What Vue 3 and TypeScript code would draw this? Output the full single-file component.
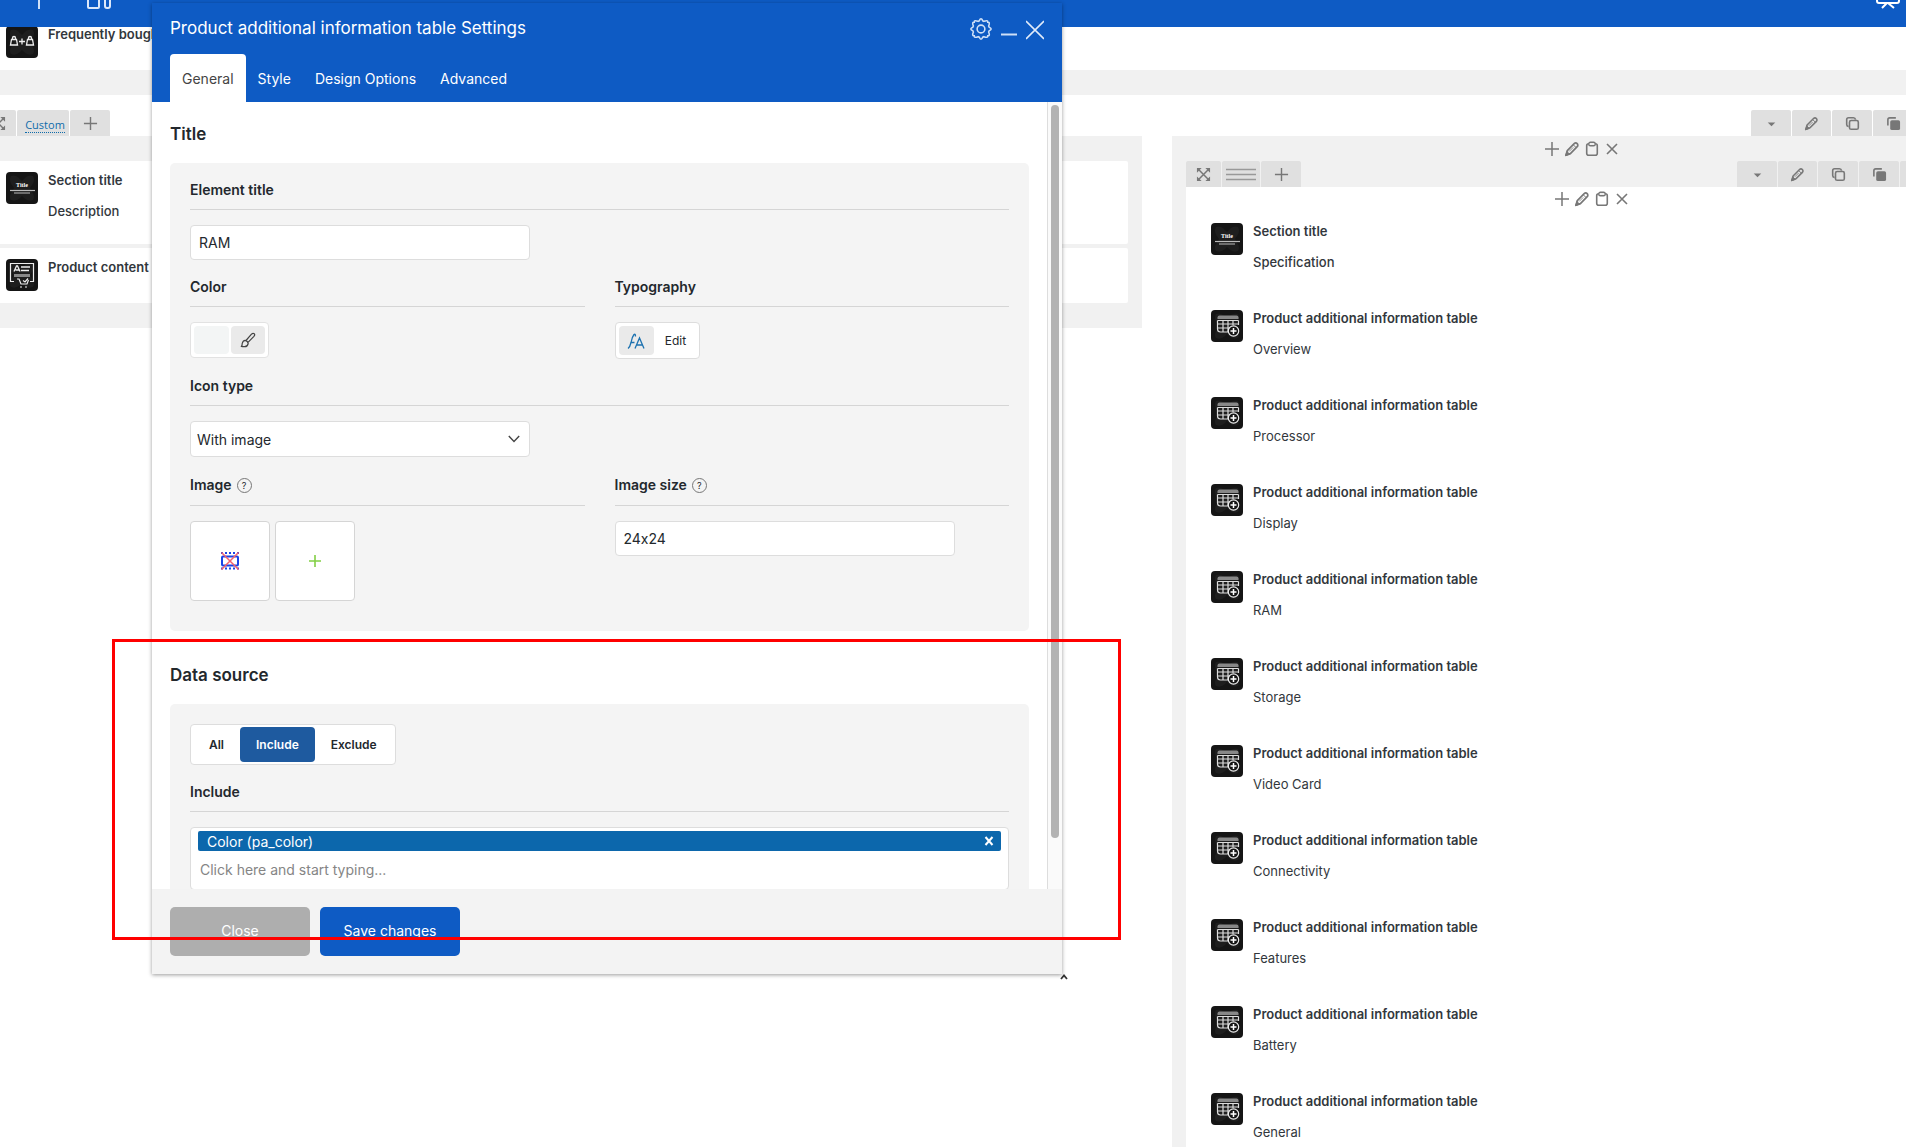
<script setup lang="ts">
import { ref } from 'vue'

interface BuilderItem {
  title: string
  description?: string
  icon: 'bought' | 'title' | 'content' | 'table'
}

const leftItems: BuilderItem[] = [
  { title: 'Section title', description: 'Description', icon: 'title' },
  { title: 'Product content', icon: 'content' },
]

const tableNames = ['Overview', 'Processor', 'Display', 'RAM', 'Storage', 'Video Card', 'Connectivity', 'Features', 'Battery', 'General']
const rightItems: BuilderItem[] = [
  { title: 'Section title', description: 'Specification', icon: 'title' },
  ...tableNames.map((name): BuilderItem => ({ title: 'Product additional information table', description: name, icon: 'table' })),
]

const tools = ['caret', 'pencil', 'copy', 'solid', 'close', 'close']
const actions = ['plus', 'pencil', 'clipboard', 'close']
const tabs = ['General', 'Style', 'Design Options', 'Advanced']
const sources = ['All', 'Include', 'Exclude']

const activeTab = ref('General')
const activeSource = ref('Include')
const elementTitle = ref('RAM')
const imageSize = ref('24x24')
const iconType = ref('With image')
const query = ref('')
</script>

<template>
  <div class="page">
    <svg class="sprite" aria-hidden="true">
      <symbol id="i-plus" viewBox="0 0 16 16"><path d="M8 1v14M1 8h14" fill="none" stroke="#777" stroke-width="1.5" /></symbol>
      <symbol id="i-close" viewBox="0 0 16 16"><path d="M3 3l10 10M13 3L3 13" fill="none" stroke="#777" stroke-width="1.6" /></symbol>
      <symbol id="i-pencil" viewBox="0 0 16 16">
        <path d="M2 14.2l1.3-4.6 6.9-6.9a2.1 2.1 0 0 1 3 3L6.4 12.6z" fill="none" stroke="#777" stroke-width="1.7" stroke-linejoin="round" />
        <path d="M9.3 3.8l3 3M1.4 14.8l1.6-4.2 2.6 2.6z" fill="#777" stroke="#777" />
        <path d="M5.2 10.4l4-4" stroke="#777" stroke-width=".8" />
      </symbol>
      <symbol id="i-clipboard" viewBox="0 0 16 16">
        <rect x="2.7" y="2.7" width="10.6" height="11.6" rx="2" fill="none" stroke="#777" stroke-width="1.6" />
        <rect x="4.8" y="1.2" width="6.4" height="3.6" rx="1.6" fill="#eee" stroke="#777" stroke-width="1.4" />
      </symbol>
      <symbol id="i-copy" viewBox="0 0 16 16">
        <path d="M3.8 11.2C2.4 11 1.8 10.2 1.8 9V3.8c0-1.3.7-2 2-2H9c1.2 0 2 .6 2.200 2" fill="none" stroke="#777" stroke-width="1.7" />
        <rect x="4.8" y="4.8" width="9.4" height="9.4" rx="1.8" fill="none" stroke="#777" stroke-width="1.7" />
      </symbol>
      <symbol id="i-solid" viewBox="0 0 16 16">
        <path d="M2 10V4c0-1.4.6-2 2-2h6.500" fill="none" stroke="#777" stroke-width="1.7" />
        <rect x="4.500" y="4.500" width="10.500" height="10.500" rx="1.8" fill="#777" />
      </symbol>
      <symbol id="i-caret" viewBox="0 0 16 16"><path d="M4 7h8L8 11z" fill="#777" /></symbol>
      <symbol id="i-expand" viewBox="0 0 16 16">
        <path d="M3 3l10 10M13 3L3 13" stroke="#777" stroke-width="1.6" />
        <path d="M1 1h5L1 6zM15 1v5l-5-5zM1 15v-5l5 5zM15 15h-5l5-5z" fill="#777" />
      </symbol>
      <symbol id="i-lines" viewBox="0 0 30 15"><path d="M0 2.500h30M0 7.500h30M0 12.500h30" stroke="#999" stroke-width="1.500" /></symbol>
      <symbol id="t-base" viewBox="0 0 32 32">
        <rect width="32" height="32" rx="4" fill="#151515" />
        <path d="M5 4c5-2 8 2 11 5 3-3 6-7 11-5 3 5-1 9-3 12 2 4 6 8 3 12-5 2-8-1-11-4-3 3-6 6-11 4-3-4 1-8 3-12C6 13 2 9 5 4z" fill="#1e1e1e" />
      </symbol>
      <symbol id="t-bought" viewBox="0 0 32 32">
        <use href="#t-base" />
        <path d="M5.500 13.500h5l1 5.500h-7zM21.500 13.500h5l1 5.500h-7zM6.500 13.500v-1.500a1.500 1.500 0 0 1 3 0v1.500M22.500 13.500v-1.500a1.500 1.500 0 0 1 3 0v1.500M13 15.500h6M16 12.500v6" fill="none" stroke="#eee" stroke-width="1.300" />
      </symbol>
      <symbol id="t-title" viewBox="0 0 32 32">
        <use href="#t-base" />
        <path d="M4 18.500h25" stroke="#bbb" stroke-width="1.200" /><path d="M8 21h16" stroke="#888" stroke-width="1.500" />
      </symbol>
      <symbol id="t-content" viewBox="0 0 32 32">
        <use href="#t-base" />
        <path d="M8 22.500H4.500v-18h23v18H24" fill="none" stroke="#eee" stroke-width="1.200" />
        <path d="M8 12.500l2.500-5.500h1l2.500 5.500M9.500 11h3.500M15 8h9M15 11.500h8" fill="none" stroke="#eee" stroke-width="1.300" />
        <rect x="8" y="15" width="16" height="3" fill="#888" />
        <path d="M11 20h2l2 5h6l1.500-4M17 21.500l2 1.500 3-3.500" fill="none" stroke="#eee" stroke-width="1.200" />
        <circle cx="15" cy="28" r="1" fill="#aaa" /><circle cx="20" cy="28" r="1" fill="#aaa" />
      </symbol>
      <symbol id="t-table" viewBox="0 0 32 32">
        <use href="#t-base" />
        <path d="M6.500 9V7.500q0-2 2-2h17q2 0 2 2V9z" fill="#888" />
        <path d="M6.500 10.500h21M6.500 10.500V19q0 3 3 3H17M6.500 14h21M6.500 18h12M12 10.500V22M17 10.500V22M22 10.500V15M27.500 10.500V15" fill="none" stroke="#ddd" stroke-width="1.200" />
        <circle cx="22.500" cy="21" r="5.200" fill="#151515" stroke="#eee" stroke-width="1.200" />
        <path d="M22.500 18v6M19.500 21h6" stroke="#fff" stroke-width="1.500" />
      </symbol>
    </svg>

    <header class="topbar">
      <svg class="top-left" viewBox="0 0 120 10" aria-hidden="true">
        <path d="M39 0v9" stroke="#cfe0f7" stroke-width="2" />
        <path d="M88 0v7q0 1 1 1h9q1 0 1-1V0M105 0v6q0 2 2 2h1q2 0 2-2V0" fill="none" stroke="#dce8fa" stroke-width="2" />
      </svg>
      <svg class="top-right" viewBox="0 0 24 10" aria-hidden="true">
        <path d="M1 0v1q0 2 2 2h18q2 0 2-2V0M11 3L6 8M12 3l6 5" fill="none" stroke="#fff" stroke-width="2" />
      </svg>
    </header>

    <main class="canvas">
      <section class="item first">
        <svg class="thumb" aria-hidden="true"><use href="#t-bought" /></svg>
        <div class="copy"><h3>Frequently bough</h3></div>
      </section>
      <div class="band"></div>

      <div class="row-bar">
        <div class="handles">
          <button class="tool narrow" aria-label="Move row"><svg><use href="#i-expand" /></svg></button>
          <span class="tool custom"><a href="#custom">Custom</a></span>
          <button class="tool" aria-label="Add column"><svg><use href="#i-plus" /></svg></button>
        </div>
        <div class="handles options">
          <button v-for="(t, i) in tools" :key="i" class="tool" :aria-label="t"><svg><use :href="'#i-' + t" /></svg></button>
        </div>
      </div>

      <div class="columns">
        <div class="column left-column">
          <article v-for="item in leftItems" :key="item.title" class="item card" :class="item.icon">
            <div class="thumb-wrap">
              <svg class="thumb" aria-hidden="true"><use :href="'#t-' + item.icon" /></svg>
              <span v-if="item.icon === 'title'" class="thumb-word">Title</span>
            </div>
            <div class="copy">
              <h3>{{ item.title }}</h3>
              <p v-if="item.description">{{ item.description }}</p>
            </div>
          </article>
        </div>

        <div class="column right-column">
          <div class="actions">
            <button v-for="a in actions" :key="a" :aria-label="a"><svg><use :href="'#i-' + a" /></svg></button>
          </div>
          <div class="inner-bar">
            <div class="handles">
              <button class="tool narrow" aria-label="Move inner row"><svg><use href="#i-expand" /></svg></button>
              <button class="tool lines" aria-label="Row layout"><svg><use href="#i-lines" /></svg></button>
              <button class="tool" aria-label="Add inner column"><svg><use href="#i-plus" /></svg></button>
            </div>
            <div class="handles options">
              <button v-for="(t, i) in tools" :key="i" class="tool" :aria-label="t"><svg><use :href="'#i-' + t" /></svg></button>
            </div>
          </div>
          <div class="inner">
            <div class="actions">
              <button v-for="a in actions" :key="a" :aria-label="a"><svg><use :href="'#i-' + a" /></svg></button>
            </div>
            <article v-for="(item, i) in rightItems" :key="i" class="item card" :class="item.icon">
              <div class="thumb-wrap">
                <svg class="thumb" aria-hidden="true"><use :href="'#t-' + item.icon" /></svg>
                <span v-if="item.icon === 'title'" class="thumb-word">Title</span>
              </div>
              <div class="copy">
                <h3>{{ item.title }}</h3>
                <p>{{ item.description }}</p>
              </div>
            </article>
          </div>
        </div>
      </div>
    </main>

    <div class="modal" role="dialog" aria-labelledby="modal-title">
      <header class="modal-head">
        <div class="head-row">
          <h1 id="modal-title">Product additional information table Settings</h1>
          <div class="head-icons">
            <button aria-label="Options">
              <svg width="22" height="22" viewBox="0.500 0.500 21 21" fill="none" stroke="#cfe0f7" stroke-width="1.500">
                <path d="M9.300 3.200Q11-.6 12.700 3.200L13.800 3.700Q17.800 2.100 17.500 4.500Q19.900 4.200 18.300 8.200L18.800 9.300Q22.600 11 18.800 12.700L18.300 13.800Q19.900 17.800 17.500 17.500Q17.800 19.900 13.800 18.300L12.700 18.800Q11 22.600 9.300 18.800L8.200 18.300Q4.200 19.900 4.500 17.500Q2.100 17.800 3.700 13.800L3.200 12.700Q-.6 11 3.200 9.300L3.700 8.200Q2.100 4.200 4.500 4.500Q4.200 2.100 8.200 3.700z" />
                <circle cx="11" cy="11" r="3.700" />
              </svg>
            </button>
            <button aria-label="Minimize">
              <svg width="16" height="22" viewBox="0 0 16 22"><path d="M0 16.500h16" stroke="#cfe0f7" stroke-width="2" /></svg>
            </button>
            <button aria-label="Close window">
              <svg width="18" height="22" viewBox="0 0 18 22"><path d="M0 3l18 18M18 3L0 21" stroke="#e0ebfa" stroke-width="1.600" /></svg>
            </button>
          </div>
        </div>
        <nav class="tabs">
          <button v-for="t in tabs" :key="t" :class="{ active: t === activeTab }" @click="activeTab = t">{{ t }}</button>
        </nav>
      </header>

      <div class="modal-middle">
        <div class="modal-body">
          <h2>Title</h2>
          <div class="panel">
            <div class="field">
              <label for="el-title">Element title</label>
              <input id="el-title" v-model="elementTitle" class="control" type="text" />
            </div>
            <div class="pair">
              <div class="field">
                <div class="label">Color</div>
                <div class="color-box">
                  <span class="swatch"></span>
                  <button aria-label="Pick color">
                    <svg width="16" height="16" viewBox="0 0 16 16" fill="none" stroke="#444" stroke-width="1.200" stroke-linejoin="round">
                      <path d="M6 8.500L11.500 2.200Q13 .7 14.200 1.700Q15.300 2.800 13.900 4.300L8 10.300" />
                      <path d="M1.300 14.500Q2.300 13.600 2.200 11.500Q2.800 8.500 5.300 8.300Q7.800 9 8.200 11.500Q7.500 14.600 4.800 14.700Q2.800 14.800 1.300 14.500z" />
                    </svg>
                  </button>
                </div>
              </div>
              <div class="field">
                <div class="label">Typography</div>
                <button class="type-box">
                  <span class="type-icon">
                    <svg width="18" height="16" viewBox="0 0 18 16" fill="none" stroke="#1d72b0" stroke-width="1.300">
                      <path d="M1 15.500Q3 14 4 9.500Q5 4 7 1.500Q8.500.5 8.500 3.500M3.500 9.500h4M8 15.500L12.500 5L17 15.500M9.800 12h5.500" />
                    </svg>
                  </span>
                  <span class="type-text">Edit</span>
                </button>
              </div>
            </div>
            <div class="field">
              <label for="icon-type">Icon type</label>
              <div class="select-wrap">
                <select id="icon-type" v-model="iconType"><option>With image</option></select>
                <svg width="12" height="8" viewBox="0 0 12 8"><path d="M.8 1L6 6.500L11.200 1" fill="none" stroke="#444" stroke-width="1.400" /></svg>
              </div>
            </div>
            <div class="pair">
              <div class="field">
                <div class="label with-help">Image <span class="help">?</span></div>
                <div class="images">
                  <button aria-label="Remove image">
                    <svg width="18" height="18" viewBox="0 0 18 18">
                      <path d="M0 1h18M0 16.500h18" stroke="#1a44e8" stroke-width="2" stroke-dasharray="2 2" />
                      <rect x="1" y="4.500" width="16" height="9" rx="1" fill="none" stroke="#1a44e8" stroke-width="2" />
                      <path d="M.5 .5l17 17M17.500 .5l-17 17" stroke="#f4606c" stroke-width="1.500" />
                    </svg>
                  </button>
                  <button aria-label="Add image">
                    <svg width="12" height="12" viewBox="0 0 12 12"><path d="M6 0v12M0 6h12" stroke="#83cf45" stroke-width="1.600" /></svg>
                  </button>
                </div>
              </div>
              <div class="field">
                <label class="with-help" for="image-size">Image size <span class="help">?</span></label>
                <input id="image-size" v-model="imageSize" class="control" type="text" />
              </div>
            </div>
          </div>

          <h2>Data source</h2>
          <div class="panel">
            <div class="switch">
              <button v-for="s in sources" :key="s" :class="{ active: s === activeSource }" @click="activeSource = s">{{ s }}</button>
            </div>
            <div class="field">
              <label for="include">Include</label>
              <div class="chooser">
                <div class="tag">
                  <span>Color (pa_color)</span>
                  <button aria-label="Remove Color">
                    <svg width="10" height="10" viewBox="0 0 10 10"><path d="M1.500 1l7 8M8.500 1l-7 8" stroke="#fff" stroke-width="2" /></svg>
                  </button>
                </div>
                <input id="include" v-model="query" type="text" placeholder="Click here and start typing..." />
              </div>
            </div>
          </div>
        </div>
        <div class="track"><div class="thumb-bar"></div></div>
      </div>

      <footer class="modal-foot">
        <button class="close-btn">Close</button>
        <button class="save-btn">Save changes</button>
      </footer>
      <svg class="grip" width="8" height="6" viewBox="0 0 8 6" aria-hidden="true"><path d="M1 5l3-3.500L7 5" fill="none" stroke="#333" stroke-width="1.800" /></svg>
    </div>

    <div class="highlight" aria-hidden="true"></div>
  </div>
</template>

<style>
body {
  margin: 0;
}
</style>

<style scoped>
* {
  box-sizing: border-box;
}
.page {
  position: relative;
  height: 100vh;
  overflow: hidden;
  background: #fff;
  color: #32373c;
  font-family: Inter, "Liberation Sans", sans-serif;
  font-size: 13px;
  font-feature-settings: "calt" 0;
}
.sprite {
  position: absolute;
  width: 0;
  height: 0;
}
h1,
h2,
h3,
p {
  margin: 0;
}
button {
  padding: 0;
  border: 0;
  background: none;
  font: inherit;
  color: inherit;
  cursor: pointer;
}
input,
select {
  font-feature-settings: inherit;
}
.topbar {
  position: relative;
  z-index: 1;
  display: flex;
  justify-content: space-between;
  height: 27px;
  padding-right: 6px;
  background: #0e5bc4;
}
.top-left {
  width: 120px;
  height: 10px;
}
.top-right {
  width: 24px;
  height: 10px;
}
.canvas {
  margin: -12px -86px 0 -19px;
}
.item {
  display: flex;
  gap: 10px;
  padding: 11px 11px 12px;
}
.first {
  padding-left: 25px;
}
.card {
  background: #fff;
  border-radius: 2px;
}
.thumb-wrap {
  position: relative;
  flex: none;
  height: 32px;
}
.thumb {
  display: block;
  width: 32px;
  height: 32px;
}
.thumb-word {
  position: absolute;
  inset: 9px 0 auto;
  font: bold 6px/8px "Liberation Serif", serif;
  color: #fff;
  text-align: center;
}
.copy h3 {
  font-size: 13px;
  font-weight: 600;
  line-height: 16px;
}
.copy p {
  margin: 15px 0 13px;
  line-height: 16px;
  font-size: 13px;
}
.title .copy p {
  font-weight: 500;
}
.band {
  height: 25px;
  background: #f1f1f1;
}
.row-bar {
  display: flex;
  justify-content: space-between;
  padding-top: 15px;
}
.inner-bar {
  display: flex;
  justify-content: space-between;
}
.handles {
  display: flex;
  gap: 1px;
}
.tool {
  display: flex;
  align-items: center;
  justify-content: center;
  width: 40px;
  height: 26px;
  background: #e0e0e0;
  border-radius: 2px 2px 0 0;
}
.tool svg {
  width: 15px;
  height: 15px;
}
.tool.narrow {
  width: 35px;
}
.tool.lines {
  width: 38px;
}
.tool.lines svg {
  width: 30px;
}
.tool.custom {
  width: 52px;
  padding: 4px 0 0 4px;
}
.tool.custom a {
  border-bottom: 1px dotted #0f6cab;
  color: #0f6cab;
  font: 11px/14px "Open Sans", "Noto Sans", sans-serif;
  text-decoration: none;
}
.options .tool:nth-child(2) {
  width: 39px;
}
.options .tool:last-child {
  width: 37px;
}
.columns {
  display: grid;
  grid-template-columns: 1161fr 820fr;
  gap: 30px;
  align-items: start;
}
.column {
  min-width: 0;
  background: #f1f1f1;
}
.left-column {
  display: flex;
  flex-direction: column;
  gap: 4px;
  padding: 25px 14px;
}
.right-column {
  padding: 0 14px 25px;
}
.actions {
  display: flex;
  align-items: center;
  justify-content: center;
  gap: 4px;
  height: 25px;
}
.actions button {
  display: flex;
}
.actions svg {
  width: 16px;
  height: 16px;
}
.inner {
  display: flex;
  flex-direction: column;
  gap: 4px;
  padding: 0 14px 25px;
  background: #fff;
}
.inner .actions {
  height: 21px;
  padding: 3px 0 0 19px;
}

.modal {
  position: absolute;
  z-index: 2;
  top: 3px;
  left: 152px;
  right: 844px;
  background: #fff;
  box-shadow: 0 1px 4px rgba(0, 0, 0, 0.4);
}
.modal-head {
  padding: 0 18px;
  background: #0e5bc4;
  color: #fff;
}
.head-row {
  display: flex;
  align-items: center;
  justify-content: space-between;
  height: 51px;
}
.head-row h1 {
  padding-bottom: 2px;
  font-size: 17px;
  font-weight: 400;
  line-height: 24px;
}
.head-icons {
  display: flex;
  align-items: center;
  gap: 9px;
}
.head-icons button {
  display: flex;
}
.tabs {
  display: flex;
}
.tabs button {
  height: 48px;
  padding: 0 12px;
  border-radius: 4px 4px 0 0;
  font-size: 14px;
}
.tabs .active {
  background: #fff;
  color: #444;
}
.modal-middle {
  display: flex;
  height: calc(100vh - 360px);
}
.modal-body {
  flex: 1;
  min-width: 0;
  padding: 22px 18px 0;
  overflow: hidden;
  color: #23282d;
}
.modal-body h2 {
  padding-bottom: 19px;
  font-size: 17px;
  font-weight: 600;
  line-height: 20px;
}
.panel {
  display: flex;
  flex-direction: column;
  gap: 20px;
  margin-bottom: 34px;
  padding: 20px 20px 30px;
  border-radius: 5px;
  background: #f4f4f4;
}
.pair {
  display: grid;
  grid-template-columns: 1fr 1fr;
  gap: 30px;
}
.field label,
.label {
  display: block;
  margin-bottom: 15px;
  padding-bottom: 12px;
  border-bottom: 1px solid #d5d5d5;
  font-size: 14px;
  font-weight: 600;
  line-height: 14px;
}
.field .with-help {
  display: flex;
  align-items: center;
  gap: 5px;
  line-height: 16px;
}
.help {
  width: 15px;
  height: 15px;
  margin-top: 1px;
  border: 1px solid #777;
  border-radius: 50%;
  font-size: 9px;
  font-weight: 400;
  line-height: 13px;
  text-align: center;
}
.control {
  display: block;
  width: 340px;
  height: 35px;
  padding: 0 8px;
  border: 1px solid #ddd;
  border-radius: 4px;
  background: #fff;
  color: #23282d;
  font-family: inherit;
  font-size: 14px;
}
.color-box {
  display: flex;
  gap: 2px;
  width: 79px;
  height: 36px;
  padding: 3px;
  border: 1px solid #e2e2e2;
  border-radius: 4px;
  background: #fff;
}
.swatch,
.color-box button {
  display: flex;
  flex: 1;
  align-items: center;
  justify-content: center;
  height: 28px;
  border-radius: 4px;
}
.swatch {
  background: #f3f5f5;
}
.color-box button,
.type-icon {
  background: #eaeaea;
}
.type-box {
  display: flex;
  align-items: center;
  width: 85px;
  height: 37px;
  padding: 3px;
  border: 1px solid #ddd;
  border-radius: 4px;
  background: #fff;
}
.type-icon {
  display: flex;
  align-items: center;
  justify-content: center;
  width: 35px;
  height: 29px;
  border-radius: 4px;
}
.type-text {
  flex: 1;
  padding-left: 2px;
  font-size: 12px;
}
.select-wrap {
  position: relative;
  width: 340px;
}
.select-wrap select {
  display: block;
  width: 100%;
  height: 36px;
  padding: 0 6px;
  border: 1px solid #ddd;
  border-radius: 4px;
  appearance: none;
  background: #fff;
  color: #23282d;
  font-family: inherit;
  font-size: 14px;
}
.select-wrap svg {
  position: absolute;
  top: 14px;
  right: 10px;
  pointer-events: none;
}
.images {
  display: flex;
  gap: 5px;
}
.images button {
  display: flex;
  align-items: center;
  justify-content: center;
  width: 80px;
  height: 80px;
  border: 1px solid #d5d5d5;
  border-radius: 4px;
  background: #fff;
}
.switch {
  display: flex;
  align-self: flex-start;
  padding: 2px;
  border: 1px solid #ddd;
  border-radius: 4px;
  background: #fff;
}
.switch button {
  height: 35px;
  padding: 0 16px;
  border-radius: 4px;
  font-size: 12px;
  font-weight: 600;
}
.switch .active {
  background: #1e5a9f;
  color: #fff;
}
.chooser {
  padding: 3px 7px;
  border: 1px solid #ddd;
  border-radius: 4px;
  background: #fff;
}
.tag {
  display: flex;
  align-items: center;
  justify-content: space-between;
  height: 20px;
  padding: 0 7px 0 9px;
  border-radius: 2px;
  background: #0c67ac;
  color: #fff;
  font-size: 14px;
}
.tag button {
  display: flex;
}
.chooser input {
  display: block;
  width: 100%;
  height: 35px;
  padding: 2px 2px 0;
  border: 0;
  background: none;
  font-family: inherit;
  font-size: 14px;
}
.chooser input::placeholder {
  color: #858585;
}
.track {
  width: 15px;
  padding: 3px 3px 0;
  border-left: 1px solid #ddd;
  background: #fafafa;
}
.thumb-bar {
  width: 8px;
  height: calc(100% - 51px);
  border-radius: 4px;
  background: #b3b3b3;
}
.modal-foot {
  display: flex;
  gap: 10px;
  padding: 18px;
  background: #f3f3f3;
}
.modal-foot button {
  width: 140px;
  height: 49px;
  padding-bottom: 2px;
  border-radius: 5px;
  color: #fff;
  font-size: 14px;
}
.modal-foot .close-btn {
  background: #aeaeae;
}
.modal-foot .save-btn {
  background: #0e5bc4;
}
.grip {
  position: absolute;
  right: -6px;
  bottom: -6px;
}
.highlight {
  position: absolute;
  z-index: 3;
  top: 639px;
  left: 112px;
  right: 785px;
  height: 301px;
  border: 3px solid #f00;
  pointer-events: none;
}
</style>
